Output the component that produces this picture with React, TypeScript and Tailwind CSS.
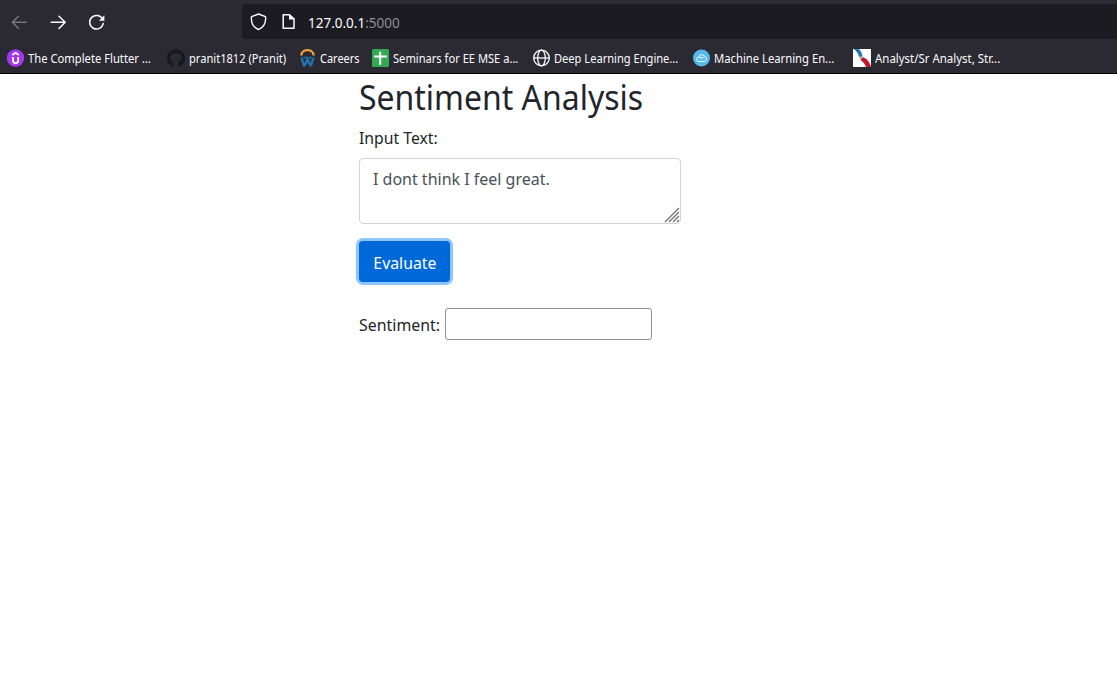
import React from "react";

const github =
  "M12 .3a12 12 0 0 0-3.8 23.4c.6.1.8-.3.8-.6v-2.2c-3.3.7-4-1.4-4-1.4-.6-1.4-1.4-1.8-1.4-1.8-1-.7.1-.7.1-.7 1.2.1 1.9 1.2 1.9 1.2 1 1.8 2.8 1.3 3.5 1 .1-.8.4-1.3.8-1.6-2.7-.3-5.5-1.3-5.5-5.9 0-1.3.5-2.4 1.2-3.2-.1-.3-.5-1.5.1-3.2 0 0 1-.3 3.3 1.2a11.5 11.5 0 0 1 6 0C17.3 5 18.3 5.3 18.3 5.3c.7 1.7.3 2.9.1 3.2.8.8 1.2 1.9 1.2 3.2 0 4.6-2.8 5.6-5.5 5.9.5.4.9 1.1.9 2.2v3.3c0 .3.2.7.8.6A12 12 0 0 0 12 .3";

const bookmarks: { label: string; item: string; text: string; icon: React.ReactNode }[] = [
  {
    label: "The Complete Flutter ...",
    item: "w-[160px] gap-[3px]",
    text: "scale-x-[0.935]",
    icon: (
      <svg viewBox="0 0 18 18" className="size-[18px] shrink-0">
        <circle cx="8.5" cy="9" r="8.7" fill="#a435f0" />
        <path d="M5.3 5.9 8.6 3.8l3.3 2.1M6 8v3.3c0 3.9 5.2 3.9 5.2 0V8" fill="none" stroke="#fff" strokeWidth="1.8" />
      </svg>
    ),
  },
  {
    label: "pranit1812 (Pranit)",
    item: "w-[132px] gap-[4px]",
    text: "scale-x-[0.925]",
    icon: (
      <svg viewBox="0 0 24 24" className="size-[18px] shrink-0">
        <path d={github} fill="#18171c" />
      </svg>
    ),
  },
  {
    label: "Careers",
    item: "w-[73px] gap-[3px]",
    text: "scale-x-[0.915]",
    icon: (
      <svg viewBox="0 0 18 18" className="size-[18px] shrink-0">
        <path d="M2.300 6.600c.1-7.300 12.200-7.300 12.300 0" fill="none" stroke="#e9a23b" strokeWidth="2.300" />
        <path d="m2.500 8.500 2.400 7.800h1L8.500 10l2.600 6.300h1l2.400-7.800" fill="none" stroke="#236fa9" strokeWidth="2.500" />
        <path d="M4.500 8.700h3M9.800 8.700h3" stroke="#236fa9" strokeWidth="1.800" />
      </svg>
    ),
  },
  {
    label: "Seminars for EE MSE a...",
    item: "w-[160px] gap-[3px]",
    text: "scale-x-[0.927]",
    icon: (
      <svg viewBox="0 0 18 18" className="size-[18px] shrink-0">
        <rect width="17" height="18" rx="1.5" fill="#34a853" />
        <path d="M2.2 7.5h12.6M8.2 2.7v13" stroke="#fff" strokeWidth="2" />
      </svg>
    ),
  },
  {
    label: "Deep Learning Engine...",
    item: "w-[161px] gap-[4px]",
    text: "scale-x-[0.925]",
    icon: (
      <svg viewBox="0 0 18 18" className="size-[18px] shrink-0" fill="none" stroke="#fbfbfe" strokeWidth="1.3">
        <circle cx="9.5" cy="9" r="7.8" />
        <ellipse cx="9.5" cy="9" rx="3.8" ry="7.8" />
        <path d="M1.7 9h15.6" />
      </svg>
    ),
  },
  {
    label: "Machine Learning En...",
    item: "w-[160px] gap-[3px]",
    text: "scale-x-[0.938]",
    icon: (
      <svg viewBox="0 0 18 18" className="size-[18px] shrink-0">
        <circle cx="8.5" cy="9" r="8.5" fill="#55b9e9" />
        <path d="M6 12.5a2.2 2.2 0 0 1-.3-4.4 3.2 3.2 0 0 1 6-.6 2.6 2.6 0 0 1-.2 5zM6 8.2c1.5-.3 2.4.7 2.5 2M8 9.5c.5-1.3 2.4-1.5 3.3-.3" fill="none" stroke="#fff" strokeWidth=".9" />
      </svg>
    ),
  },
  {
    label: "Analyst/Sr Analyst, Str...",
    item: "gap-[4px]",
    text: "scale-x-[0.954]",
    icon: (
      <svg viewBox="0 0 18 18" className="size-[18px] shrink-0">
        <rect width="18" height="18" fill="#fff" />
        <path d="M.8 0h5c2 1.500 3 3.500 3.700 7.300L6.500 8.500C5 4.500 3.500 2 .8 0z" fill="#2278b8" />
        <path d="m6.500 7.800 3-.8 1.200 1.600-3 2.300z" fill="#a9b4bc" />
        <path d="M7.500 10.800 10 8.500c3.500.5 6.500 4 8 9.500h-5c-1-3.500-3-4.700-5.500-7.200z" fill="#c3172e" />
      </svg>
    ),
  },
];

function BrowserChrome() {
  return (
    <header className="flex h-[74px] flex-col border-b border-black bg-[#2b2a33] text-[#fbfbfe]">
      <div className="flex h-[43px] shrink-0 pt-[4px]">
        <nav className="flex w-[242px] shrink-0 items-start gap-[23px] pl-[11px] pt-[10px]">
          <svg viewBox="0 0 16 16" className="size-[16px]" fill="none" stroke="#77767d" strokeWidth="1.4" strokeLinecap="round" strokeLinejoin="round">
            <path d="M15.300 8.300H1.300M7.500 2.200 1.300 8.300l6.200 6.200" />
          </svg>
          <svg viewBox="0 0 16 16" className="size-[16px]" fill="none" stroke="#fbfbfe" strokeWidth="1.500" strokeLinecap="round" strokeLinejoin="round">
            <path d="M1.200 8.300h14M9 2.200l6.200 6.100L9 14.500" />
          </svg>
          <svg viewBox="0 0 16 16" className="size-[16px]" fill="none" stroke="#fbfbfe" strokeWidth="1.500" strokeLinecap="round">
            <path d="M13.600 5.200a6.800 6.800 0 1 0 .6 4.200" />
            <path d="M15.400 1.200v5.500H9.900z" fill="#fbfbfe" stroke="none" />
          </svg>
        </nav>
        <div className="flex h-[35px] flex-1 items-center rounded-l-[4px] bg-[#1c1b22] pl-[8px] pt-px">
          <svg viewBox="0 0 18 18" className="size-[18px]" fill="none" stroke="#fbfbfe" strokeWidth="1.400" strokeLinejoin="round">
            <path d="M8.500 1 15.500 3.700c.6 5.300-1.200 10.300-7 12.900-5.800-2.600-7.600-7.600-7-12.900z" />
          </svg>
          <svg viewBox="0 0 16 18" className="ml-[12px] h-[18px] w-[16px]" fill="none" stroke="#fbfbfe" strokeWidth="1.500" strokeLinejoin="round">
            <path d="M3.200 1.800h6.300l4.500 4v9.400H3.200z" />
            <path d="M9 1.500v5h5z" fill="#fbfbfe" stroke="none" />
          </svg>
          <span className="ml-[12px] whitespace-nowrap pt-[2px] text-[13.500px] leading-[20px]">
            127.0.0.1<span className="text-[#8f8f96]">:5000</span>
          </span>
        </div>
      </div>
      <div className="flex h-[30px] items-center pl-[7px]">
        {bookmarks.map((b) => (
          <div key={b.label} className={"flex shrink-0 items-center " + b.item}>
            {b.icon}
            <span className={"origin-left whitespace-nowrap pt-[2px] text-[12px] leading-[18px] " + b.text}>{b.label}</span>
          </div>
        ))}
      </div>
    </header>
  );
}

export default function App() {
  return (
    <div className="min-h-[696px] bg-white font-['Noto_Sans',sans-serif] text-[#212529]">
      <BrowserChrome />
      <main className="ml-[359px] flex w-[400px] flex-col items-start">
        <h1 className="mt-[2px] origin-left scale-x-[0.940] whitespace-nowrap text-[34px] leading-[42px]">Sentiment Analysis</h1>
        <label htmlFor="text" className="mt-[7px] origin-left scale-x-[0.927] whitespace-nowrap text-[17px] leading-[26px]">
          Input Text:
        </label>
        <div className="mt-[7px] flex h-[66px] w-[322px] justify-between rounded-[4px] border border-[#ced4da]">
          <div id="text" className="ml-[13px] w-[200px] origin-left scale-x-[0.940] whitespace-nowrap pt-[7px] text-[17px] leading-[26px] text-[#495057]">
            I dont think I feel great.
          </div>
          <svg viewBox="0 0 16 16" className="mt-[48px] size-[16px]" stroke="#6c6c72" strokeWidth="1.200">
            <path d="M1 15 15 1M5 15 15 5M9 15l6-6M13 15l2-2" />
          </svg>
        </div>
        <button className="mt-[17px] flex h-[41px] w-[91px] items-center justify-center rounded-[4px] bg-[#0069d9] pt-[2px] text-white ring-[3px] ring-[#8fc5ff]">
          <span className="scale-x-[0.930] whitespace-nowrap text-[17px] leading-[26px]">Evaluate</span>
        </button>
        <div className="mt-[26px] flex items-center">
          <label htmlFor="sentiment" className="-mr-[4px] w-[90px] origin-left scale-x-[0.936] whitespace-nowrap pt-[2px] text-[17px] leading-[26px]">
            Sentiment:
          </label>
          <input id="sentiment" className="h-[32px] w-[207px] rounded-[3px] border border-[#8f8f9d] bg-white" />
        </div>
      </main>
    </div>
  );
}
